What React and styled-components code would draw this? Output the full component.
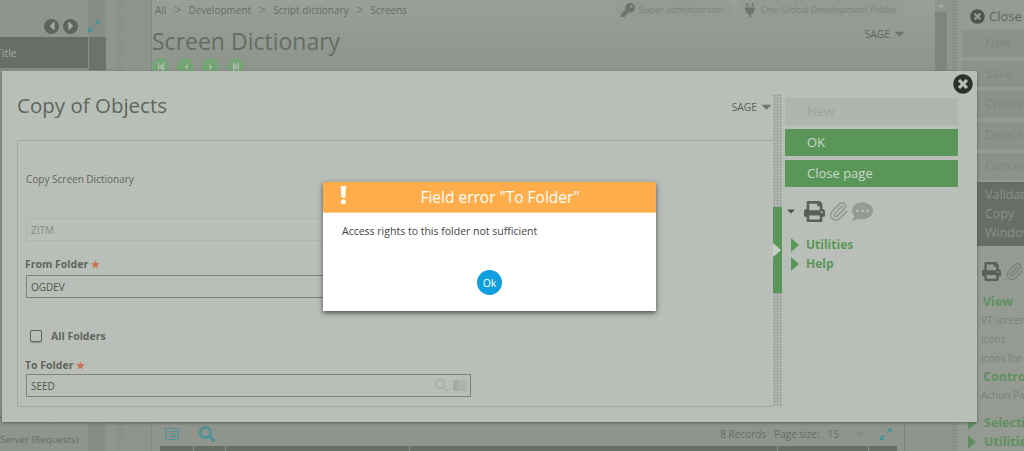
import React from "react";
import styled, { createGlobalStyle } from "styled-components";
import { FaKey, FaPlug, FaPrint, FaCommentDots, FaTimesCircle, FaSearch, FaCaretDown, FaCaretLeft, FaCaretRight, FaStepBackward, FaStepForward } from "react-icons/fa";
import { Paperclip } from "lucide-react";

const GlobalStyle = createGlobalStyle`
  html, body { margin: 0; padding: 0; overflow: hidden; }
  body { font-family: "Open Sans", "Noto Sans", sans-serif; color: #5c625b; }
  * { box-sizing: border-box; }
`;

const Page = styled.div`
  position: relative;
  width: 1024px;
  height: 451px;
  display: grid;
  grid-template-columns: 117px 5px 29px 784px 17px 5px 1fr;
  background: #8e948c;
  overflow: hidden;
`;

const Splitter = styled.div`
  background-image: radial-gradient(circle, #777d75 0.7px, transparent 1px);
  background-size: 3px 3px;
`;

const LeftPanel = styled.aside`
  display: flex;
  flex-direction: column;
  background: linear-gradient(90deg, #8f958d 88px, #878d85 88px, #878d85 105px, #8f958d 105px);
`;

const NavRow = styled.div`
  height: 37px;
  padding: 15px 16px 0 44px;
  display: flex;
  align-items: center;
  gap: 4px;
`;

const RoundArrow = styled.span`
  width: 15px;
  height: 15px;
  border-radius: 50%;
  background: #5e645d;
  color: #a5aaa2;
  display: flex;
  align-items: center;
  justify-content: center;
  font-size: 14px;
`;

const ExpandIcon = ({ size = 14, color = "#4d9098" }) => (
  <svg width={size} height={size} viewBox="0 0 14 14" fill={color}>
    <path d="M8 1h5v5l-1.7-1.7-2.3 2.3-1.4-1.4 2.3-2.3z" />
    <path d="M6 13H1V8l1.7 1.7 2.3-2.3 1.4 1.4-2.3 2.3z" />
  </svg>
);

const ExpandSlot = styled.span`
  margin-left: auto;
  display: flex;
`;

const TitleRow = styled.div`
  height: 33px;
  display: grid;
  grid-template-columns: 88px 17px;
  gap: 1px;
`;

const TitleCell = styled.div`
  background: #686e65;
  border-bottom: 2px solid #868c84;
  color: #a8ada5;
  font-size: 10.5px;
  line-height: 32px;
  text-indent: -4px;
  overflow: hidden;
`;

const TitleEdge = styled.div`
  background: #6d736b;
`;

const LeftSpacer = styled.div`
  flex: 1;
`;

const LeftItem = styled.div`
  height: 21px;
  font-size: 9.7px;
  line-height: 20px;
  color: #666c64;
  white-space: nowrap;
`;

const Main = styled.main`
  display: flex;
  flex-direction: column;
  background: linear-gradient(#9aa098, #8f958d 65px);
  border-left: 1px solid #83897f;
`;

const TopRow = styled.div`
  height: 22px;
  display: flex;
  align-items: flex-start;
  padding-left: 3px;
`;

const Crumbs = styled.nav`
  display: flex;
  align-items: center;
  height: 20px;
  gap: 7px;
  font-size: 10px;
  color: #666c64;
  flex: 1;
`;

const CrumbArrow = styled.span`
  font-size: 14px;
  font-weight: 300;
  line-height: 14px;
`;

const Pill = styled.span`
  height: 21px;
  display: inline-flex;
  align-items: center;
  gap: 4px;
  padding: 0 8px 0 7px;
  margin-left: 4px;
  border-radius: 10px;
  background: #959b93;
  color: #7c8279;
  font-size: 9.1px;
  white-space: nowrap;
  svg { color: #6f756c; font-size: 14px; }
`;

const PillsEnd = styled.div`
  display: flex;
  margin-top: -1px;
  margin-right: 30px;
`;

const Sage = styled.div`
  display: flex;
  align-items: center;
  align-self: flex-start;
  gap: 2px;
  margin-top: ${(p) => p.$top}px;
  padding-right: ${(p) => p.$right || 0}px;
  font-size: 10.3px;
  color: ${(p) => p.$color || "#5f655d"};
  svg { color: #6f756d; font-size: 15px; margin-right: -2px; }
`;

const TitleWrap = styled.div`
  display: flex;
  justify-content: space-between;
  height: 36px;
  padding-right: 30px;
`;

const ScreenTitle = styled.h1`
  margin: 0;
  font-weight: 400;
  font-size: 23px;
  line-height: 38px;
  color: #666c63;
`;

const NavCircles = styled.div`
  display: flex;
  gap: 8px;
`;

const NavCircle = styled.span`
  width: 17px;
  height: 17px;
  border-radius: 50%;
  background: #74a574;
  color: #a6b5a4;
  display: flex;
  align-items: center;
  justify-content: center;
  font-size: 10px;
`;

const MainSpacer = styled.div`
  flex: 1;
`;

const BottomBlock = styled.div`
  margin-right: 30px;
  border-right: 1px solid #7b8178;
`;

const ListBar = styled.div`
  height: 24px;
  display: flex;
  align-items: center;
  gap: 20px;
  padding: 0 11px 0 13px;
  color: #4d9098;
  svg { flex: none; }
`;

const ListIcon = () => (
  <svg width="14" height="12" viewBox="0 0 14 12" fill="none" stroke="#4d9098">
    <rect x="0.5" y="0.5" width="13" height="11" />
    <path d="M5 3.5h7M5 6h7M5 8.5h7M2 4h1.5M2 7h1.5" />
  </svg>
);

const Records = styled.span`
  margin-left: auto;
  display: flex;
  gap: 8px;
  font-size: 10px;
  color: #666c64;
  align-items: center;
  margin-right: -8px;
  svg { color: #858b83; font-size: 14px; margin-left: 6px; }
`;

const TableHead = styled.div`
  height: 5px;
  margin: 0 7px 0 8px;
  display: grid;
  grid-template-columns: 33px 31px 183px 367px 90px 1fr;
  gap: 1px;
`;

const HeadCell = styled.span`
  background: #686e65;
`;

const Scroll = styled.div`
  position: relative;
  padding: 12px 5px 0 0;
  background: #8f958d;
  &::before {
    content: "";
    position: absolute;
    left: 3px;
    top: 3px;
    border-left: 3px solid transparent;
    border-right: 3px solid transparent;
    border-bottom: 4px solid #a5aba3;
  }
`;

const ScrollThumb = styled.div`
  height: 100px;
  background: #7f857c;
`;

const RightPanel = styled.aside`
  display: flex;
  flex-direction: column;
  padding: 3px 0 0 5px;
  background: #959b93;
  white-space: nowrap;
  overflow: hidden;
`;

const CloseRow = styled.div`
  height: 27px;
  padding-left: 8px;
  display: flex;
  align-items: center;
  gap: 4px;
  font-size: 13px;
  color: #5f655d;
  svg { font-size: 15px; color: #4d534c; }
`;

const GhostButton = styled.div`
  height: 27px;
  margin-bottom: 4px;
  padding-left: 23px;
  background: #8c928a;
  color: #80867d;
  font-size: 12.5px;
  line-height: 26px;
`;

const DarkBlock = styled.div`
  height: 65px;
  margin-top: -2px;
  padding: 3px 0 0 23px;
  background: #686e65;
  color: #8b9188;
  font-size: 12.5px;
  line-height: 19px;
`;

const RightIcons = styled.div`
  display: flex;
  align-items: center;
  gap: 4px;
  padding: 5px 0 0 20px;
  height: 46px;
  font-size: 21px;
  color: #5a6059;
`;

const ArrowMark = styled.span`
  flex: none;
  width: 0;
  height: 0;
  border-left: 8px solid ${(p) => p.$color};
  border-top: 7px solid transparent;
  border-bottom: 7px solid transparent;
`;

const RightHead = styled.div`
  margin-top: ${(p) => p.$top || 0}px;
  height: 19px;
  padding-left: ${(p) => (p.$arrow ? 6 : 21)}px;
  display: flex;
  align-items: center;
  gap: 8px;
  font-size: 12.5px;
  font-weight: 700;
  color: #5f8f61;
`;

const RightLink = styled.div`
  height: 19px;
  padding-left: 19px;
  font-size: 10px;
  line-height: 18px;
  color: #7a8078;
`;

/* the modal window, lies over the page */
const Modal = styled.section`
  position: absolute;
  left: 2px;
  top: 71px;
  width: 975px;
  height: 351px;
  display: grid;
  grid-template-columns: 771px 9px 1fr;
  padding-top: 23px;
  background: #b9bfb8;
  box-shadow: 0 1px 3px rgba(60, 65, 60, 0.6);
`;

const ModalClose = styled.span`
  position: absolute;
  top: 3px;
  right: 4px;
  width: 20px;
  height: 20px;
  border-radius: 50%;
  display: flex;
  align-items: center;
  justify-content: center;
  color: #2d312e;
  font-size: 20px;
`;

const ModalBody = styled.div`
  display: flex;
  flex-direction: column;
  padding: 0 0 15px 15px;
`;

const ModalHeader = styled.div`
  height: 46px;
  display: flex;
  justify-content: space-between;
  align-items: flex-start;
`;

const ModalTitle = styled.h2`
  margin: -2px 0 0;
  font-weight: 400;
  font-size: 20.5px;
  line-height: 26px;
  color: #5f655d;
`;

const FormBox = styled.div`
  flex: 1;
  margin-right: -1px;
  border: 1px solid #a2a8a1;
  padding: 31px 0 0 8px;
`;

const Caption = styled.div`
  height: 14px;
  font-size: 10px;
  line-height: 14px;
  color: #5f655d;
`;

const Field = styled.div`
  width: 445px;
  height: 23px;
  margin-top: ${(p) => p.$top || 0}px;
  display: flex;
  align-items: center;
  justify-content: space-between;
  padding: 0 3px 0 4px;
  border: ${(p) => (p.$plain ? "1px dotted #a5aba4" : "1px solid #7d837c")};
  font-size: 10px;
  color: ${(p) => (p.$plain ? "#858b84" : "#4f554e")};
`;

const FieldLabel = styled.label`
  display: block;
  height: 13px;
  margin-top: ${(p) => p.$top || 0}px;
  margin-left: -1px;
  font-size: 10.5px;
  line-height: 13px;
  font-weight: 700;
  color: #5f655d;
  i { font-style: normal; color: #c9714f; font-size: 10px; }
`;

const CheckRow = styled.div`
  display: flex;
  align-items: center;
  gap: 9px;
  height: 14px;
  margin: 31px 0 0 4px;
  font-size: 10.5px;
  font-weight: 700;
  color: #5f655d;
`;

const CheckBox = styled.span`
  width: 12px;
  height: 12px;
  border: 1px solid #5f655d;
  border-radius: 2px;
  box-shadow: 0 1px 1px #8f958d;
`;

const FieldIcons = styled.span`
  display: flex;
  align-items: center;
  gap: 5px;
  color: #a9afa8;
  font-size: 13px;
`;

const LookupIcon = styled.span`
  width: 14px;
  height: 11px;
  background: #adb3ac;
  border-radius: 1px;
  border-left: 5px solid #a5aba4;
`;

const ModalSplitter = styled.div`
  position: relative;
  margin-bottom: 15px;
  background-color: #aeb4ad;
  background-image: radial-gradient(circle, #868c85 0.6px, transparent 0.9px);
  background-size: 3px 3px;
`;

const SplitterTab = styled.div`
  position: absolute;
  left: 0;
  top: 113px;
  width: 9px;
  height: 86px;
  background: #5a9658;
  display: flex;
  align-items: center;
  &::after {
    content: "";
    border-left: 8px solid #c7d0c6;
    border-top: 7px solid transparent;
    border-bottom: 7px solid transparent;
  }
`;

const ActionColumn = styled.div`
  display: flex;
  flex-direction: column;
  gap: 4px;
  padding: 4px 19px 0 3px;
`;

const ActionButton = styled.div`
  height: 27px;
  padding-left: 22px;
  font-size: 13px;
  line-height: 26px;
  background: ${(p) => (p.$on ? "#5a9658" : "#afb5ae")};
  color: ${(p) => (p.$on ? "#ccd6ca" : "#9ea49d")};
`;

const ActionIcons = styled.div`
  display: flex;
  align-items: center;
  height: 34px;
  margin-top: 3px;
  gap: 3px;
  font-size: 21px;
  color: #5a6059;
`;

const ActionCaret = styled.span`
  display: flex;
  font-size: 12px;
  margin-right: 4px;
  color: #4f554e;
`;

const ActionLink = styled.div`
  display: flex;
  align-items: center;
  gap: 7px;
  height: 19px;
  padding-left: 6px;
  font-size: 12px;
  font-weight: 700;
  color: #5a9658;
  margin-top: ${(p) => p.$top || 0}px;
`;

/* the error box, lies over the modal */
const Dialog = styled.div`
  position: absolute;
  left: 323px;
  top: 182px;
  width: 333px;
  height: 129px;
  background: #fff;
  box-shadow: 0 2px 5px rgba(40, 44, 40, 0.75);
  display: flex;
  flex-direction: column;
`;

const DialogHeader = styled.header`
  height: 31px;
  display: flex;
  align-items: center;
  justify-content: center;
  padding-left: 21px;
  position: relative;
  background: #ffad4a;
  border-bottom: 1px solid #ffc888;
  color: #fff;
  font-size: 15.5px;
`;

const Bang = styled.span`
  position: absolute;
  left: 17px;
  top: -2px;
  font-size: 24px;
  line-height: 30px;
  font-weight: 800;
  color: #fff;
`;

const DialogText = styled.p`
  margin: 0;
  padding: 11px 0 0 19px;
  height: 57px;
  font-size: 10.5px;
  line-height: 15px;
  color: #444;
`;

const OkButton = styled.button`
  align-self: center;
  width: 25px;
  height: 25px;
  padding: 0;
  border: 0;
  border-radius: 50%;
  background: #0f9fdf;
  color: #fff;
  font: 10.5px "Open Sans", sans-serif;
`;

export default function App() {
  return (
    <Page>
      <GlobalStyle />
      <LeftPanel>
        <NavRow>
          <RoundArrow><FaCaretLeft /></RoundArrow>
          <RoundArrow><FaCaretRight /></RoundArrow>
          <ExpandSlot><ExpandIcon /></ExpandSlot>
        </NavRow>
        <TitleRow>
          <TitleCell>Title</TitleCell>
          <TitleEdge />
        </TitleRow>
        <LeftSpacer />
        <LeftItem>Server (Requests)</LeftItem>
        <LeftItem>Server (Requests)</LeftItem>
      </LeftPanel>
      <Splitter />
      <div />
      <Main>
        <TopRow>
          <Crumbs>
            <span>All</span><CrumbArrow>&gt;</CrumbArrow>
            <span>Development</span><CrumbArrow>&gt;</CrumbArrow>
            <span>Script dictionary</span><CrumbArrow>&gt;</CrumbArrow>
            <span>Screens</span>
          </Crumbs>
          <PillsEnd>
            <Pill><FaKey />Super administrator</Pill>
            <Pill><FaPlug />One Global Development Folder</Pill>
          </PillsEnd>
        </TopRow>
        <TitleWrap>
          <ScreenTitle>Screen Dictionary</ScreenTitle>
          <Sage $top={4}>SAGE <FaCaretDown /></Sage>
        </TitleWrap>
        <NavCircles>
          <NavCircle><FaStepBackward /></NavCircle>
          <NavCircle><FaCaretLeft /></NavCircle>
          <NavCircle><FaCaretRight /></NavCircle>
          <NavCircle><FaStepForward /></NavCircle>
        </NavCircles>
        <MainSpacer />
        <BottomBlock>
          <ListBar>
            <ListIcon />
            <FaSearch />
            <Records>
              <span>8 Records</span>
              <span>Page size:</span>
              <span>15</span>
              <FaCaretDown />
            </Records>
            <ExpandIcon />
          </ListBar>
          <TableHead>
            <HeadCell /><HeadCell /><HeadCell /><HeadCell /><HeadCell /><HeadCell />
          </TableHead>
        </BottomBlock>
      </Main>
      <Scroll><ScrollThumb /></Scroll>
      <Splitter />
      <RightPanel>
        <CloseRow><FaTimesCircle />Close</CloseRow>
        <GhostButton>New</GhostButton>
        <GhostButton>Save</GhostButton>
        <GhostButton>Create</GhostButton>
        <GhostButton>Delete</GhostButton>
        <GhostButton>Cancel</GhostButton>
        <DarkBlock>Validate<br />Copy<br />Window</DarkBlock>
        <RightIcons><FaPrint /><Paperclip size={21} color="#7f857d" /></RightIcons>
        <RightHead>View</RightHead>
        <RightLink>VT screen</RightLink>
        <RightLink>Icons</RightLink>
        <RightLink>Icons for</RightLink>
        <RightHead>Control</RightHead>
        <RightLink>Action Pa</RightLink>
        <RightHead $arrow $top={8}><ArrowMark $color="#5f8f61" />Selection</RightHead>
        <RightHead $arrow><ArrowMark $color="#5f8f61" />Utilities</RightHead>
      </RightPanel>

      <Modal>
        <ModalClose><FaTimesCircle /></ModalClose>
        <ModalBody>
          <ModalHeader>
            <ModalTitle>Copy of Objects</ModalTitle>
            <Sage $top={5} $right={1} $color="#5a6059">SAGE <FaCaretDown /></Sage>
          </ModalHeader>
          <FormBox>
            <Caption>Copy Screen Dictionary</Caption>
            <Field $plain $top={32}>ZITM</Field>
            <FieldLabel $top={17}>From Folder <i>★</i></FieldLabel>
            <Field $top={4}>OGDEV</Field>
            <CheckRow><CheckBox />All Folders</CheckRow>
            <FieldLabel $top={16}>To Folder <i>★</i></FieldLabel>
            <Field $top={2}>
              SEED
              <FieldIcons><FaSearch /><LookupIcon /></FieldIcons>
            </Field>
          </FormBox>
        </ModalBody>
        <ModalSplitter><SplitterTab /></ModalSplitter>
        <ActionColumn>
          <ActionButton>New</ActionButton>
          <ActionButton $on>OK</ActionButton>
          <ActionButton $on>Close page</ActionButton>
          <ActionIcons>
            <ActionCaret><FaCaretDown /></ActionCaret>
            <FaPrint />
            <Paperclip size={21} color="#959b94" />
            <FaCommentDots color="#959b94" />
          </ActionIcons>
          <ActionLink $top={3}><ArrowMark $color="#5a9658" />Utilities</ActionLink>
          <ActionLink $top={-4}><ArrowMark $color="#5a9658" />Help</ActionLink>
        </ActionColumn>
      </Modal>

      <Dialog>
        <DialogHeader>
          <Bang>!</Bang>
          Field error "To Folder"
        </DialogHeader>
        <DialogText>Access rights to this folder not sufficient</DialogText>
        <OkButton>Ok</OkButton>
      </Dialog>
    </Page>
  );
}
